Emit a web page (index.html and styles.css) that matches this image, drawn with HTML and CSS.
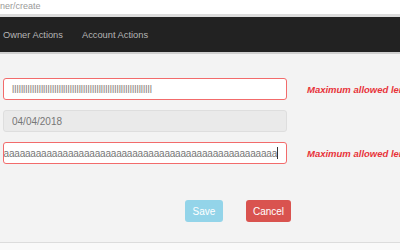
FILE: index.html
```html
<!DOCTYPE html>
<html lang="en">
<head>
  <meta charset="UTF-8" />
  <title>Owner Create</title>
  <link rel="stylesheet" href="styles.css">
</head>
<body>
  <div class="address-bar">ner/create</div>

  <nav class="navbar">
    <a class="nav-link">Owner Actions</a>
    <a class="nav-link">Account Actions</a>
  </nav>

  <form class="owner-form">
    <div class="form-row">
      <input class="form-input invalid" type="text" value="lllllllllllllllllllllllllllllllllllllllllllllllllllllllllllllll" />
      <span class="error-text">Maximum allowed length is 60 characters</span>
    </div>
    <div class="form-row">
      <input class="form-input" type="text" value="04/04/2018" disabled />
    </div>
    <div class="form-row">
      <div class="form-input invalid scrolled"><span>aaaaaaaaaaaaaaaaaaaaaaaaaaaaaaaaaaaaaaaaaaaaaaaaaaaaaaaaaaaaa</span><i class="caret"></i></div>
      <span class="error-text">Maximum allowed length is 100 characters</span>
    </div>

    <div class="button-row">
      <button class="btn btn-save" type="button" disabled>Save</button>
      <button class="btn btn-cancel" type="button">Cancel</button>
    </div>
  </form>

  <div class="footer-line"></div>
</body>
</html>
```

FILE: styles.css
```css
* {
  margin: 0;
  padding: 0;
  box-sizing: border-box;
}

html, body {
  width: 100%;
  height: 100%;
  overflow: hidden;
  font-family: "Liberation Sans", Arial, sans-serif;
  background-color: #f3f3f3;
}

.address-bar {
  height: 17px;
  background: #fff;
  border-bottom: 3px solid #dcdcdc;
  color: #999;
  font-size: 9px;
  line-height: 13px;
}

.navbar {
  height: 37px;
  background: #222;
  border-bottom: 2px solid #cfcfcf;
  display: flex;
  align-items: center;
  padding: 1px 0 0 3px;
  gap: 19px;
}

.nav-link {
  color: #b5b5b5;
  font-size: 9.3px;
  text-decoration: none;
}

.owner-form {
  padding: 24px 0 0 3px;
}

.form-row {
  display: flex;
  align-items: center;
  height: 22px;
  margin-bottom: 10px;
  white-space: nowrap;
  overflow: hidden;
}

.form-input {
  width: 284px;
  height: 22px;
  border: 1px solid #ccc;
  border-radius: 3px;
  background: #fff;
  padding: 0 8px;
  font-family: inherit;
  font-size: 10px;
  color: #666;
  outline: none;
  flex-shrink: 0;
}

.form-input.invalid {
  border-color: #f26b6b;
  color: #8a8478;
}

.form-input:disabled {
  background: #eaeaea;
  border-color: #dedede;
  color: #777;
}

.form-input.scrolled {
  display: flex;
  align-items: center;
  justify-content: flex-end;
  overflow: hidden;
  padding: 0 8px 0 0;
  color: #777;
}

.form-input.scrolled span {
  letter-spacing: -0.2px;
}

.caret {
  display: inline-block;
  width: 1px;
  height: 12px;
  background: #333;
  flex-shrink: 0;
}

.error-text {
  margin-left: 20px;
  color: #e8333a;
  font-size: 9.5px;
  font-weight: bold;
  font-style: italic;
}

.button-row {
  display: flex;
  padding: 26px 0 0 182px;
  gap: 23px;
}

.btn {
  height: 22px;
  border: none;
  border-radius: 3px;
  color: #fff;
  font-family: inherit;
  font-size: 10px;
}

.btn-save {
  width: 38px;
  background: #93d4e9;
}

.btn-cancel {
  width: 45px;
  background: #d9534f;
}

.footer-line {
  position: absolute;
  left: 0;
  top: 242px;
  width: 100%;
  border-top: 1px solid #dcdcdc;
  height: 8px;
  background: #f9f9f9;
}
```
